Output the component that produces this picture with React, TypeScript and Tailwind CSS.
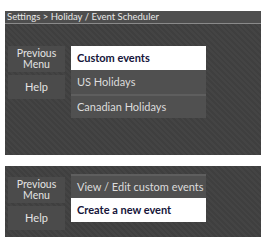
const hatch =
  "bg-[repeating-linear-gradient(45deg,#3f3f3f_0px,#3f3f3f_2px,#444444_2px,#444444_4px)]";

function SideButtons() {
  return (
    <div className="flex flex-col gap-[3px] w-[57px]">
      <div className="h-[26px] bg-[#4b4b4b] flex flex-col items-center justify-center leading-[11px] text-[10.5px] text-[#e4e4e4]">
        <span>Previous</span>
        <span>Menu</span>
      </div>
      <div className="h-[24px] bg-[#4b4b4b] flex items-center justify-center text-[11px] text-[#e4e4e4]">
        Help
      </div>
    </div>
  );
}

function Item({ label, active, sep }: { label: string; active?: boolean; sep?: boolean }) {
  return (
    <div
      className={
        active
          ? "h-[24px] bg-white flex items-center px-[6px] text-[11px] font-bold text-[#15153a]"
          : sep
          ? "h-[24px] bg-[#505050] border-t-2 border-[#5e5e5e] flex items-center px-[6px] text-[11px] text-[#dcdcdc]"
          : "h-[24px] bg-[#505050] flex items-center px-[6px] text-[11px] text-[#dcdcdc]"
      }
    >
      {label}
    </div>
  );
}

export default function App() {
  return (
    <div className="w-[261px] h-[248px] bg-white pt-[11px] pl-[5px] font-['Lato',sans-serif]">
      <div className={`h-[144px] ${hatch}`}>
        <div className="h-[13px] bg-[#4e4e4e] border-b border-[#8a8a8a] flex items-center pl-[2px] text-[9.5px] text-[#e8e8e8] leading-none">
          Settings &gt; Holiday / Event Scheduler
        </div>
        <div className="flex gap-[6px] pl-[3px] pt-[22px]">
          <SideButtons />
          <div className="w-[135px] flex flex-col">
            <Item label="Custom events" active />
            <Item label="US Holidays" />
            <Item label="Canadian Holidays" sep />
          </div>
        </div>
      </div>
      <div className={`mt-[11px] h-[71px] ${hatch} pl-[3px] pt-[11px]`}>
        <div className="flex gap-[6px]">
          <SideButtons />
          <div className="w-[135px] flex flex-col mt-[-3px]">
            <div className="h-[24px] bg-[#505050] border-t-2 border-[#5e5e5e] flex items-center px-[6px] text-[11px] text-[#dcdcdc] whitespace-nowrap">
              View / Edit custom events
            </div>
            <Item label="Create a new event" active />
          </div>
        </div>
      </div>
    </div>
  );
}
